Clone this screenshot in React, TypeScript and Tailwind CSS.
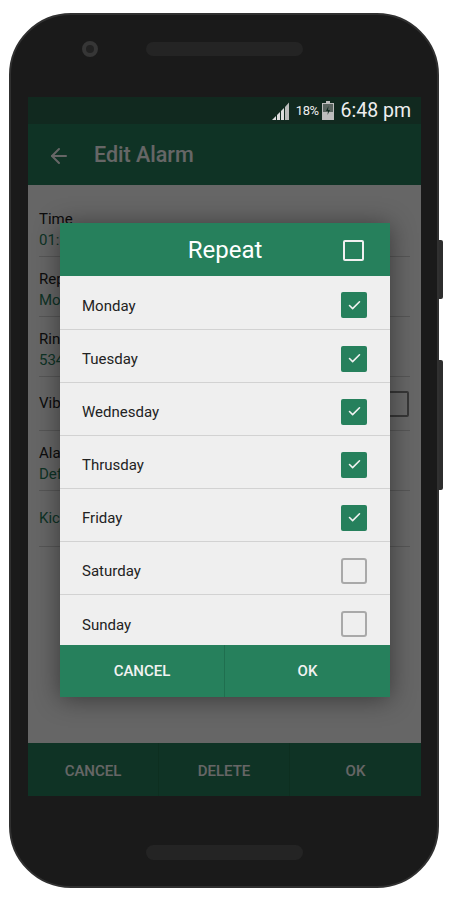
import { ArrowLeft, Check } from "lucide-react";

const days = [
  { name: "Monday", on: true },
  { name: "Tuesday", on: true },
  { name: "Wednesday", on: true },
  { name: "Thrusday", on: true },
  { name: "Friday", on: true },
  { name: "Saturday", on: false },
  { name: "Sunday", on: false },
];

function Field({ label, value, height }: { label: string; value?: string; height: string }) {
  return (
    <div className={`${height} flex flex-col justify-end pb-[5px] border-b border-[#d8d8d8]`}>
      <div className="text-[15px] leading-[21px] text-[#222]">{label}</div>
      {value && <div className="text-[15px] leading-[21px] text-[#26805c]">{value}</div>}
    </div>
  );
}

function DayBox({ on }: { on: boolean }) {
  if (on) {
    return (
      <div className="w-[26px] h-[26px] rounded-[2px] bg-[#26805c] flex items-center justify-center">
        <Check size={15} strokeWidth={2.5} className="text-[#f2f2f2]" />
      </div>
    );
  }
  return <div className="w-[26px] h-[26px] rounded-[3px] border-2 border-[#a9a9a9]" />;
}

function StatusBar() {
  return (
    <div className="h-[27px] bg-[#11291f] flex items-center justify-end pr-[10px] text-[#eee]">
      <svg width="18" height="18" viewBox="0 0 18 18" className="mr-[6px]">
        <path d="M0 18 L4 14 V18Z" fill="#ddd" />
        <path d="M5 13 L8 10 V18 H5Z" fill="#ddd" />
        <path d="M9 9 L12 6 V18 H9Z" fill="#ddd" />
        <path d="M13 5 L17 0.5 V18 H13Z" fill="#bbb" />
      </svg>
      <span className="text-[13px] tracking-[-0.5px] mr-[3px]">18%</span>
      <svg width="12" height="19" viewBox="0 0 12 19" className="mr-[7px]">
        <path d="M4 0 H8 V2 H12 V19 H0 V2 H4Z" fill="#bdbdbd" />
        <path d="M1 3 H11 V11 H1Z" fill="#59645f" />
        <path d="M6.5 5 L4 10 H6 L5.5 14 L8 9 H6Z" fill="#11291f" />
      </svg>
      <span className="text-[19.5px] leading-none">6:48 pm</span>
    </div>
  );
}

export default function App() {
  return (
    <div className="relative w-[450px] h-[900px] bg-white pt-[13px] pl-[9px] overflow-hidden font-['Roboto',sans-serif]">
      <div className="absolute left-[438px] top-[240px] w-[5px] h-[59px] rounded-r-[2px] bg-[#2d2d2d]" />
      <div className="absolute left-[438px] top-[360px] w-[5px] h-[130px] rounded-r-[2px] bg-[#2d2d2d]" />

      <div className="relative w-[430px] h-[875px] rounded-[62px] bg-[#1a1a1a] border-2 border-[#303030] px-[17px] flex flex-col">
        <div className="relative h-[82px] shrink-0 flex justify-center pt-[27px]">
          <div className="w-[157px] h-[14px] rounded-full bg-[#242424]" />
          <div className="absolute left-[54px] top-[26px] w-[16px] h-[16px] rounded-full border-4 border-[#363636] bg-[#222]" />
        </div>

        <div className="relative w-[393px] h-[699px] shrink-0 flex flex-col bg-white">
          <StatusBar />
          <div className="h-[61px] bg-[#26805c] flex items-center pt-[2px] pl-[19px] text-white">
            <ArrowLeft size={24} strokeWidth={2} />
            <span className="ml-[23px] text-[21.5px] font-medium">Edit Alarm</span>
          </div>

          <div className="flex-1 px-[11px]">
            <Field label="Time" value="01:30 pm" height="h-[72px]" />
            <Field label="Repeat" value="Monday" height="h-[60px]" />
            <Field label="Ringtone" value="534" height="h-[60px]" />
            <div className="h-[54px] flex items-center justify-between pr-[1px] border-b border-[#d8d8d8]">
              <span className="text-[15px] text-[#222]">Vibrate</span>
              <div className="w-[22px] h-[26px] border-2 border-[#888] rounded-[2px]" />
            </div>
            <Field label="Alarm" value="Default" height="h-[60px]" />
            <div className="h-[56px] flex items-center border-b border-[#d8d8d8] text-[15px] text-[#26805c]">Kick</div>
          </div>

          <div className="h-[53px] bg-[#26805c] grid grid-cols-3 text-white text-[15px] font-medium">
            <div className="flex items-center justify-center pt-[3px] border-r border-[#227552]">CANCEL</div>
            <div className="flex items-center justify-center pt-[3px] border-r border-[#227552]">DELETE</div>
            <div className="flex items-center justify-center pt-[3px]">OK</div>
          </div>

          {/* dim layer, status bar stays bright */}
          <div className="absolute inset-x-0 top-[27px] bottom-0 bg-black/60" />

          <div className="absolute left-[32px] top-[126px] w-[330px] h-[474px] flex flex-col bg-[#efefef] shadow-[0_2px_24px_rgba(0,0,0,0.45)]">
            <div className="relative h-[53px] shrink-0 bg-[#26805c] flex items-center justify-center text-white text-[24px]">
              Repeat
              <div className="absolute right-[26px] top-[17px] w-[21px] h-[21px] rounded-[2px] border-2 border-[#f0f0f0]" />
            </div>
            <div className="flex-1 overflow-hidden">
              {days.map((d) => (
                <div
                  key={d.name}
                  className="h-[53px] flex items-center justify-between pt-[5px] pl-[22px] pr-[23px] border-b border-[#d2d2d2] first:h-[54px] last:border-b-0 last:h-[50px] last:pt-[8px]"
                >
                  <span className="text-[15px] text-[#222] pt-[2px]">{d.name}</span>
                  <DayBox on={d.on} />
                </div>
              ))}
            </div>
            <div className="h-[52px] shrink-0 bg-[#26805c] grid grid-cols-[165px_165px] text-[#f2f2f2] text-[15px] font-medium">
              <div className="flex items-center justify-center border-r border-[#1f6f4f]">CANCEL</div>
              <div className="flex items-center justify-center">OK</div>
            </div>
          </div>
        </div>

        <div className="flex-1 flex justify-center pt-[49px]">
          <div className="w-[157px] h-[15px] rounded-full bg-[#242424]" />
        </div>
      </div>
    </div>
  );
}
